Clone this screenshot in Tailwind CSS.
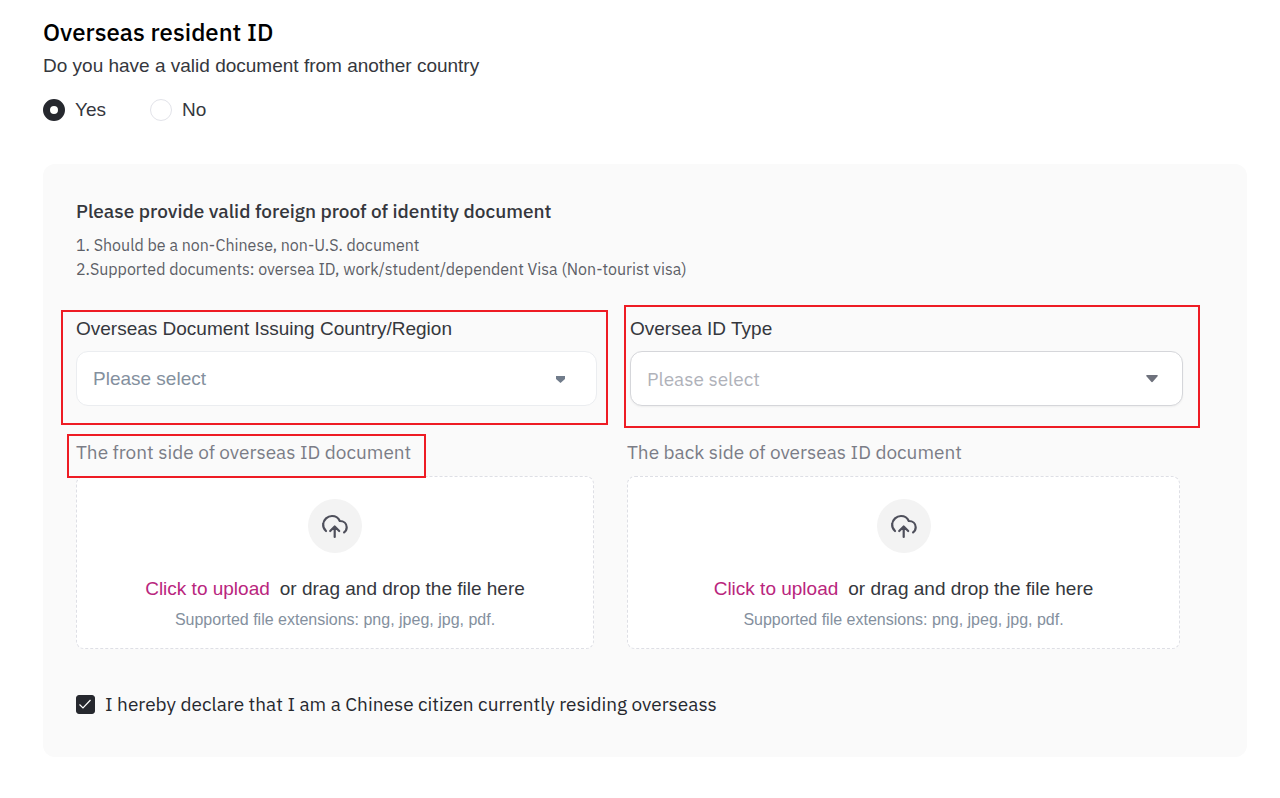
<!DOCTYPE html>
<html lang="en">
<head>
    <meta charset="UTF-8">
    <meta name="viewport" content="width=device-width, initial-scale=1.0">
    <title>Overseas resident ID</title>

    <script src="https://cdn.jsdelivr.net/npm/@tailwindcss/browser@4"></script>
</head>
<body class="bg-white font-['IBM_Plex_Sans','Roboto',sans-serif] text-[#35373d]">

    <form class="pt-4 pl-[43px] pr-[33px] pb-10">
        <h1 class="text-[24px] leading-8 font-medium text-black">Overseas resident ID</h1>

        <fieldset class="font-['Liberation_Sans',Arial,sans-serif] text-[19px]">
            <legend class="pt-0.5 leading-8">Do you have a valid document from another country</legend>
            <div class="mt-4 flex gap-11 leading-6">
                <label class="flex items-center gap-2.5">
                    <input type="radio" name="has-document" value="yes" checked class="size-[22px] appearance-none rounded-full border border-[#e2e3e9] checked:border-[7px] checked:border-[#26282e]">
                    Yes
                </label>
                <label class="flex items-center gap-2.5">
                    <input type="radio" name="has-document" value="no" class="size-[22px] appearance-none rounded-full border border-[#e2e3e9] checked:border-[7px] checked:border-[#26282e]">
                    No
                </label>
            </div>
        </fieldset>

        <section class="mt-[42px] rounded-xl bg-[#fafafa] pt-[33px] pr-16 pb-[39px] pl-[33px]">
            <h2 class="text-[19px] leading-7 font-medium">Please provide valid foreign proof of identity document</h2>
            <div class="mt-2 text-[16px] leading-6 text-[#5d5f67]">
                <p>1. Should be a non-Chinese, non-U.S. document</p>
                <p>2.Supported documents: oversea ID, work/student/dependent Visa (Non-tourist visa)</p>
            </div>

            <!-- Country and ID type -->
            <div class="mt-[34px] grid grid-cols-[521fr_553fr] gap-[33px]">
                <div class="relative">
                    <div class="pointer-events-none absolute -top-[5px] -right-[11px] -bottom-[19px] -left-[15px] border-2 border-[#ee1c24]"></div>
                    <label for="country" class="block font-['Liberation_Sans',Arial,sans-serif] text-[19px] leading-7">Overseas Document Issuing Country/Region</label>
                    <div class="relative mt-2">
                        <select id="country" class="h-[55px] w-full appearance-none rounded-xl border border-[#ebedf0] bg-white px-4 pt-0.5 font-['Liberation_Sans',Arial,sans-serif] text-[19px] text-[#84909e]">
                            <option>Please select</option>
                        </select>
                        <svg class="pointer-events-none absolute top-6 right-8 h-2 w-[9px]" viewBox="0 0 9 8" fill="#717c8b"><path d="M0 1h9v3L4.500 8 0 4z"/></svg>
                    </div>
                </div>
                <div class="relative">
                    <div class="pointer-events-none absolute -top-2.5 -right-[17px] -bottom-[22px] -left-1.5 border-2 border-[#ee1c24]"></div>
                    <label for="id-type" class="block font-['Liberation_Sans',Arial,sans-serif] text-[19px] leading-7">Oversea ID Type</label>
                    <div class="relative mt-2">
                        <select id="id-type" class="h-[55px] w-full appearance-none rounded-xl border border-[#d5d6da] bg-white px-4 pt-0.5 text-[19px] text-[#b0b2ba] shadow-xs">
                            <option>Please select</option>
                        </select>
                        <svg class="pointer-events-none absolute top-6 right-[25px] h-2 w-3" viewBox="0 0 12 8" fill="#6e717c"><path d="M1 0h10q1 0 .8 1L7 6.600Q6 7.700 5 6.600L.2 1Q0 0 1 0z"/></svg>
                    </div>
                </div>
            </div>

            <!-- Document uploads -->
            <div class="mt-8 mr-[3px] grid grid-cols-[518fr_553fr] gap-[33px]">
                <div>
                    <h3 class="relative w-fit text-[19px] leading-7 text-[#7b7d87]">
                        The front side of overseas ID document
                        <span class="pointer-events-none absolute -top-1 -right-[15px] -bottom-3 -left-[9px] border-2 border-[#ee1c24]"></span>
                    </h3>
                    <label class="mt-2.5 flex flex-col items-center rounded-lg border border-dashed border-[#dedfe5] bg-white pt-[22px] pb-4 font-['Liberation_Sans',Arial,sans-serif]">
                        <input type="file" accept=".png,.jpeg,.jpg,.pdf" class="sr-only">
                        <span class="flex size-[54px] items-center justify-center rounded-full bg-[#f3f3f3]">
                            <svg class="size-7" viewBox="0 0 28 28" fill="none" stroke="#4e4f5b" stroke-width="2.200" stroke-linecap="round" stroke-linejoin="round"><path d="M5 19C2.800 17 1.900 14.500 2.200 12 2.600 7.500 6.500 4 11 4c3.600 0 6.500 1.900 7.800 5 4 .1 6.900 2.700 6.900 6.200 0 2-.8 3.800-2.600 5.100M13.700 25V14.500M9.200 19l4.500-4.500 4.500 4.500"/></svg>
                        </span>
                        <span class="mt-[22px] flex gap-2.5 text-[19px] leading-7"><span class="text-[#b9267d]">Click to upload</span> <span>or drag and drop the file here</span></span>
                        <span class="mt-[5px] text-[16px] leading-6 text-[#84909e]">Supported file extensions: png, jpeg, jpg, pdf.</span>
                    </label>
                </div>
                <div>
                    <h3 class="w-fit text-[19px] leading-7 text-[#7b7d87]">The back side of overseas ID document</h3>
                    <label class="mt-2.5 flex flex-col items-center rounded-lg border border-dashed border-[#dedfe5] bg-white pt-[22px] pb-4 font-['Liberation_Sans',Arial,sans-serif]">
                        <input type="file" accept=".png,.jpeg,.jpg,.pdf" class="sr-only">
                        <span class="flex size-[54px] items-center justify-center rounded-full bg-[#f3f3f3]">
                            <svg class="size-7" viewBox="0 0 28 28" fill="none" stroke="#4e4f5b" stroke-width="2.200" stroke-linecap="round" stroke-linejoin="round"><path d="M5 19C2.800 17 1.900 14.500 2.200 12 2.600 7.500 6.500 4 11 4c3.600 0 6.500 1.900 7.800 5 4 .1 6.900 2.700 6.900 6.200 0 2-.8 3.800-2.600 5.100M13.700 25V14.500M9.200 19l4.500-4.500 4.500 4.500"/></svg>
                        </span>
                        <span class="mt-[22px] flex gap-2.5 text-[19px] leading-7"><span class="text-[#b9267d]">Click to upload</span> <span>or drag and drop the file here</span></span>
                        <span class="mt-[5px] text-[16px] leading-6 text-[#84909e]">Supported file extensions: png, jpeg, jpg, pdf.</span>
                    </label>
                </div>
            </div>

            <!-- Declaration -->
            <label class="mt-[41px] flex w-fit items-center gap-2.5 text-[19px] leading-7 text-[#26282e]">
                <span class="grid">
                    <input type="checkbox" checked class="peer col-start-1 row-start-1 size-[19px] appearance-none rounded-[3px] border border-[#26282e] bg-white checked:bg-[#26282e]">
                    <svg class="pointer-events-none invisible col-start-1 row-start-1 size-[19px] peer-checked:visible" viewBox="0 0 19 19" fill="none" stroke="#fff" stroke-width="1.200"><path d="M3.500 9.500l3.500 3.500L14.500 5"/></svg>
                </span>
                I hereby declare that I am a Chinese citizen currently residing overseass
            </label>
        </section>
    </form>

</body>
</html>
